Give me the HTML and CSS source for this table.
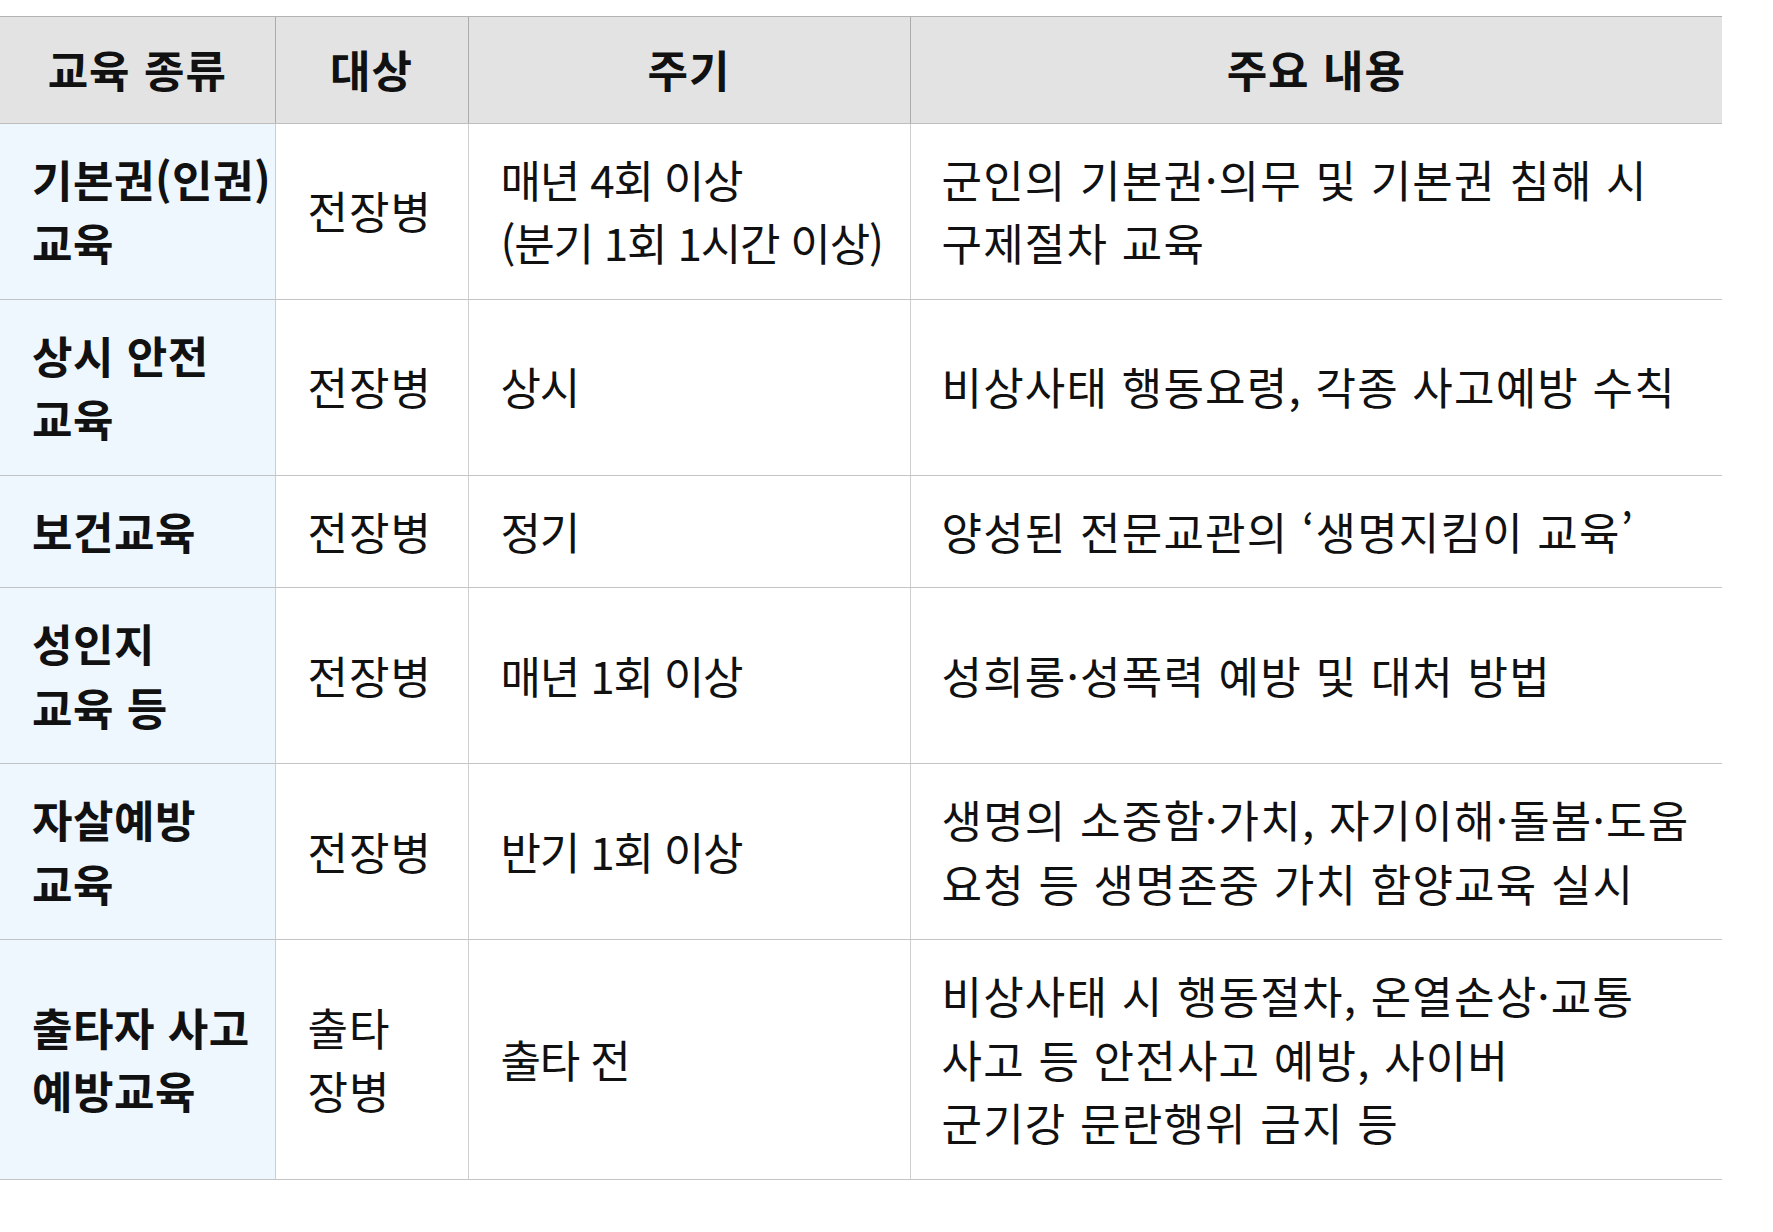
FILE: index.html
```html
<!DOCTYPE html>
<html lang="ko">
<head>
<meta charset="utf-8">
<title>교육 종류</title>
<link rel="stylesheet" href="styles.css">
</head>
<body>
<table class="edu-table">
  <colgroup>
    <col class="col-kind">
    <col class="col-target">
    <col class="col-cycle">
    <col class="col-content">
  </colgroup>
  <thead>
    <tr>
      <th>교육 종류</th>
      <th>대상</th>
      <th>주기</th>
      <th>주요 내용</th>
    </tr>
  </thead>
  <tbody>
    <tr>
      <th scope="row">기본권(인권)<br>교육</th>
      <td>전장병</td>
      <td>매년 4회 이상<br>(분기 1회 1시간 이상)</td>
      <td>군인의 기본권·의무 및 기본권 침해 시<br>구제절차 교육</td>
    </tr>
    <tr>
      <th scope="row">상시 안전<br>교육</th>
      <td>전장병</td>
      <td>상시</td>
      <td>비상사태 행동요령, 각종 사고예방 수칙</td>
    </tr>
    <tr>
      <th scope="row">보건교육</th>
      <td>전장병</td>
      <td>정기</td>
      <td>양성된 전문교관의 ‘생명지킴이 교육’</td>
    </tr>
    <tr>
      <th scope="row">성인지<br>교육 등</th>
      <td>전장병</td>
      <td>매년 1회 이상</td>
      <td>성희롱·성폭력 예방 및 대처 방법</td>
    </tr>
    <tr>
      <th scope="row">자살예방<br>교육</th>
      <td>전장병</td>
      <td>반기 1회 이상</td>
      <td>생명의 소중함·가치, 자기이해·돌봄·도움<br>요청 등 생명존중 가치 함양교육 실시</td>
    </tr>
    <tr>
      <th scope="row">출타자 사고<br>예방교육</th>
      <td>출타<br>장병</td>
      <td>출타 전</td>
      <td>비상사태 시 행동절차, 온열손상·교통<br>사고 등 안전사고 예방, 사이버<br>군기강 문란행위 금지 등</td>
    </tr>
  </tbody>
</table>
</body>
</html>
```

FILE: styles.css
```css
html, body {
  margin: 0;
  padding: 0;
  background: #ffffff;
}

body {
  font-family: "Noto Sans CJK KR", "Noto Sans", sans-serif;
  color: #111111;
}

.edu-table {
  margin-top: 16px;
  width: 1722px;
  border-collapse: collapse;
  table-layout: fixed;
  font-size: 44px;
  line-height: 63.5px;
  letter-spacing: 0.5px;
}

.col-kind { width: 275px; }
.col-target { width: 193px; }
.col-cycle { width: 442px; }
.col-content { width: 812px; }

.edu-table th,
.edu-table td {
  padding: 24px 32px;
  text-align: left;
  vertical-align: middle;
  border-top: 1px solid #c4c4c4;
  border-bottom: 1px solid #c4c4c4;
  border-left: 1px solid #cfcfcf;
  font-weight: 400;
  white-space: nowrap;
}

.edu-table th:first-child,
.edu-table td:first-child {
  border-left: none;
}

/* 대상 */
.edu-table tbody td:nth-child(2) {
  letter-spacing: 1px;
}

/* 주기 */
.edu-table tbody td:nth-child(3) {
  letter-spacing: -1.2px;
}

/* 주요 내용 */
.edu-table tbody td:nth-child(4) {
  padding-left: 31px;
  letter-spacing: 1.2px;
}

.edu-table thead th {
  background: #e3e3e3;
  text-align: center;
  font-weight: 700;
  padding: 21px 16px;
  letter-spacing: 1px;
  border-top: 1px solid #b3b3b3;
  border-bottom: 1px solid #bdbdbd;
  border-left-color: #ababab;
}

.edu-table tbody th {
  background: #eef6fe;
  font-weight: 700;
}
```
